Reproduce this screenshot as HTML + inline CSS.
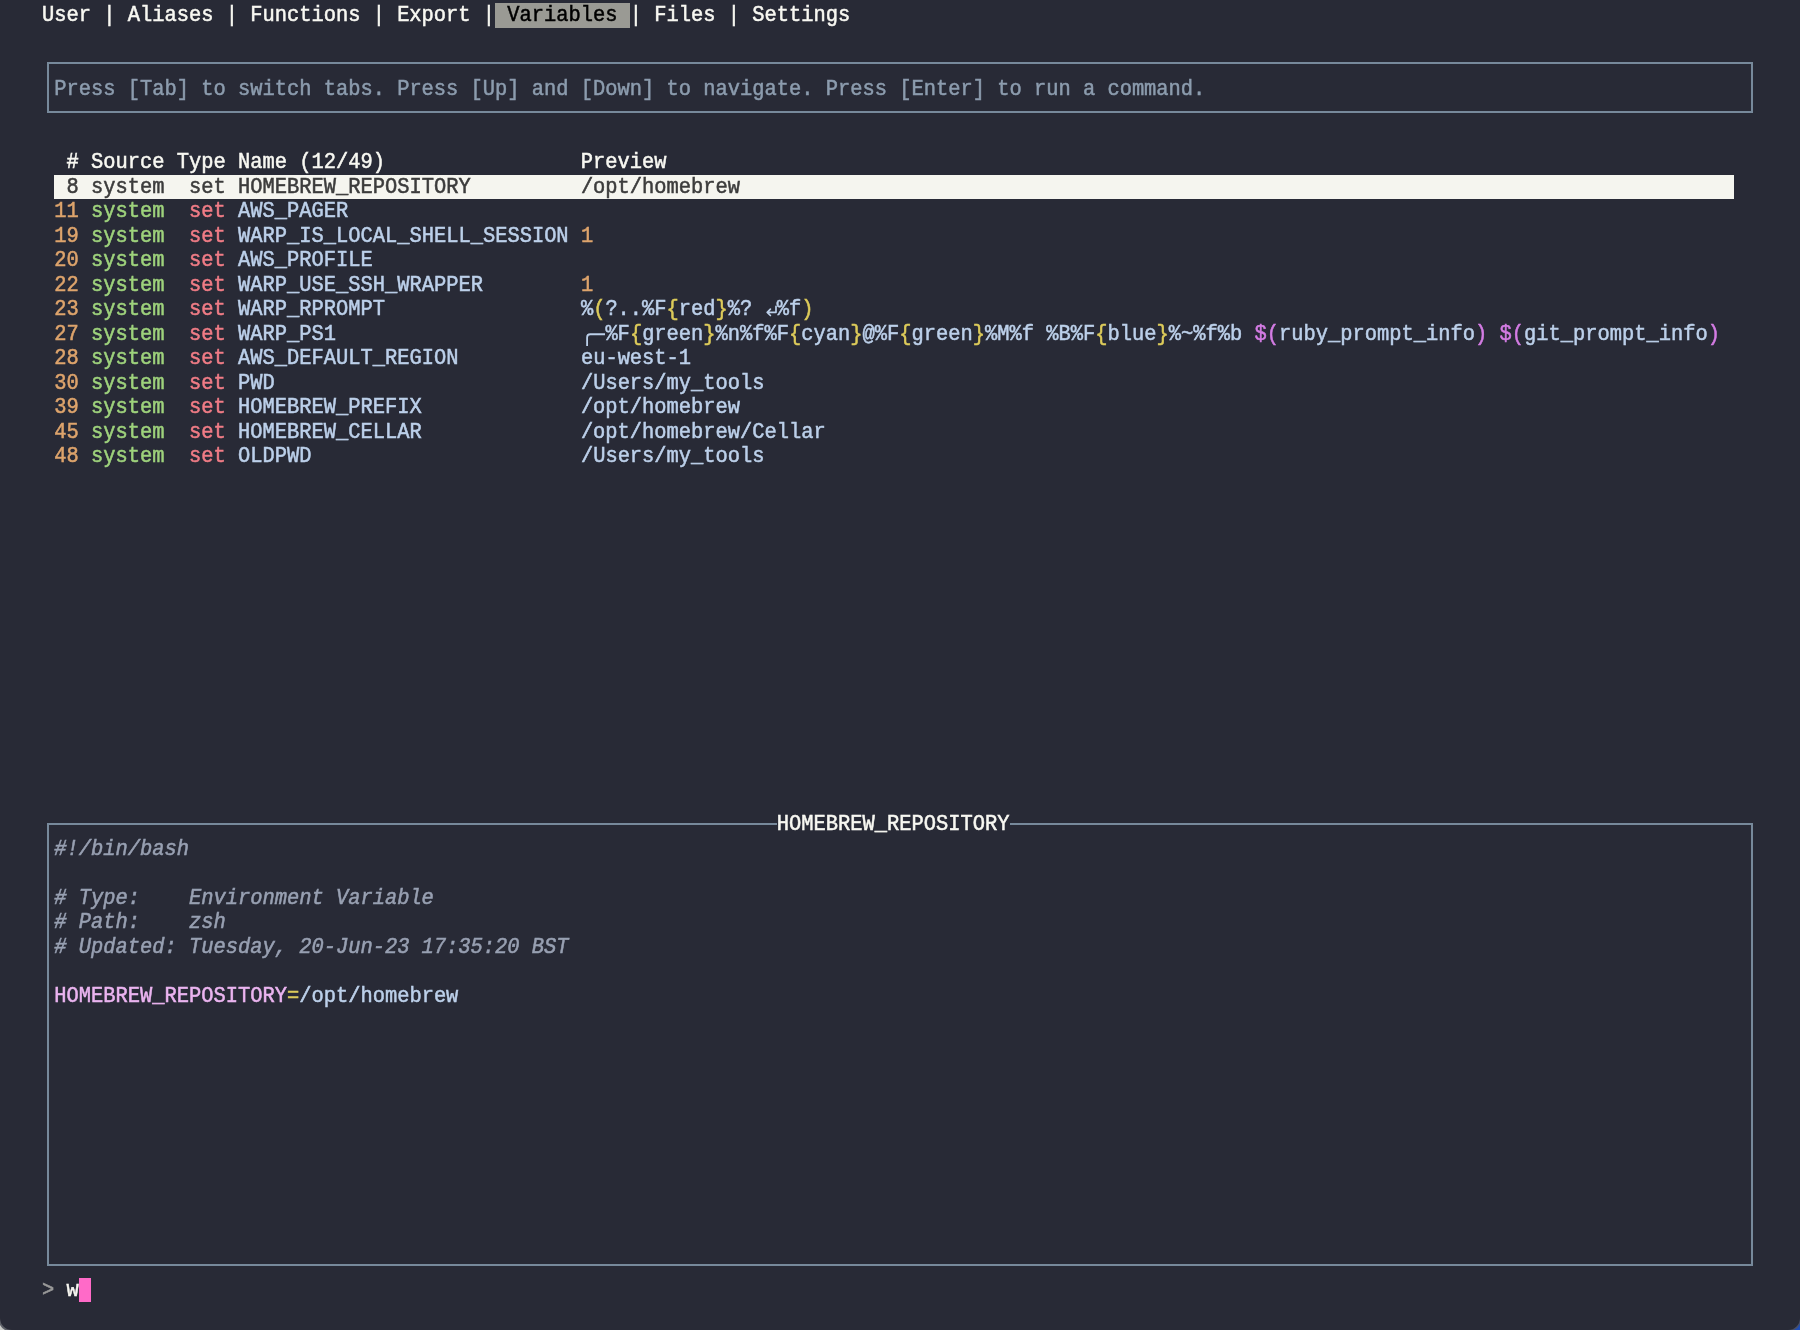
<!DOCTYPE html>
<html><head><meta charset="utf-8">
<style>
html,body{margin:0;padding:0;}
body{width:1800px;height:1330px;overflow:hidden;background:#282a36;position:relative;
font-family:"Liberation Mono",monospace;font-size:20.413px;color:#bcd0ea;}
.r{position:absolute;left:41.75px;height:24.51px;line-height:24.51px;white-space:pre;transform:translateY(1.4px) scaleY(1.06);transform-origin:0 17.69px;-webkit-text-stroke:0.5px currentColor;will-change:transform;}
.fg{color:#f8f8f2}
.tabsel{color:#000}
.hl-tab{position:absolute;background:#9a9a94}
.hl-row{position:absolute;background:#f5f5ef}
.sel{color:#3c3c3c}
.hd{color:#f8f8f2}
.dim{color:#8c9cae}
.o{color:#dea46c}
.g{color:#9ed27c}
.rd{color:#f07c86}
.t{color:#bcd0ea}
.y{color:#ddcb5a}
.p{color:#d47ce4}
.pk{color:#ebb4f0}
.cm{color:#98a0b2;font-style:italic}
.prm{color:#9a9a9a}
.cursor{position:absolute;background:#ff6ac8}
.glyph{position:absolute}
.box{position:absolute;border:2px solid #77899b;box-sizing:border-box;}
#helpbox{left:47px;top:62px;width:1706px;height:51px}
#prevbox{left:47px;top:822.5px;width:1706px;height:443px}

</style></head><body>
<div class="hl-tab" style="left:495.00px;top:3.20px;width:134.75px;height:24.51px"></div>
<div class="r " style="top:3.20px;"><span class="fg">User | Aliases | Functions | Export |</span><span class="tabsel"> Variables </span><span class="fg">| Files | Settings</span></div>
<div class="box" id="helpbox"></div>
<div class="r " style="top:76.73px;"> <span class="dim">Press [Tab] to switch tabs. Press [Up] and [Down] to navigate. Press [Enter] to run a command.</span></div>
<div class="r " style="top:150.26px;">  <span class="hd">#</span> <span class="hd">Source</span> <span class="hd">Type</span> <span class="hd">Name (12/49)</span>                <span class="hd">Preview</span></div>
<div class="hl-row" style="left:54.1px;top:174.5px;width:1679.6px;height:24.7px"></div>
<div class="r " style="top:174.77px;">  <span class="sel">8</span> <span class="sel">system</span>  <span class="sel">set</span> <span class="sel">HOMEBREW_REPOSITORY</span>         <span class="sel">/opt/homebrew</span></div>
<div class="r " style="top:199.28px;"> <span class="o">11</span> <span class="g">system</span>  <span class="rd">set</span> <span class="t">AWS_PAGER</span></div>
<div class="r " style="top:223.79px;"> <span class="o">19</span> <span class="g">system</span>  <span class="rd">set</span> <span class="t">WARP_IS_LOCAL_SHELL_SESSION</span> <span class="o">1</span></div>
<div class="r " style="top:248.30px;"> <span class="o">20</span> <span class="g">system</span>  <span class="rd">set</span> <span class="t">AWS_PROFILE</span></div>
<div class="r " style="top:272.81px;"> <span class="o">22</span> <span class="g">system</span>  <span class="rd">set</span> <span class="t">WARP_USE_SSH_WRAPPER</span>        <span class="o">1</span></div>
<div class="r " style="top:297.32px;"> <span class="o">23</span> <span class="g">system</span>  <span class="rd">set</span> <span class="t">WARP_RPROMPT</span>                <span class="t">%</span><span class="y">(</span><span class="t">?..%F</span><span class="y">{</span><span class="t">red</span><span class="y">}</span><span class="t">%?</span><span class="t"> </span><span class="t"> </span><span class="t">%f</span><span class="y">)</span></div>
<div class="r " style="top:321.83px;"> <span class="o">27</span> <span class="g">system</span>  <span class="rd">set</span> <span class="t">WARP_PS1</span>                    <span class="t">  </span><span class="t">%F</span><span class="y">{</span><span class="t">green</span><span class="y">}</span><span class="t">%n%f%F</span><span class="y">{</span><span class="t">cyan</span><span class="y">}</span><span class="t">@%F</span><span class="y">{</span><span class="t">green</span><span class="y">}</span><span class="t">%M%f %B%F</span><span class="y">{</span><span class="t">blue</span><span class="y">}</span><span class="t">%~%f%b </span><span class="p">$(</span><span class="t">ruby_prompt_info</span><span class="p">)</span><span class="t"> </span><span class="p">$(</span><span class="t">git_prompt_info</span><span class="p">)</span></div>
<div class="r " style="top:346.34px;"> <span class="o">28</span> <span class="g">system</span>  <span class="rd">set</span> <span class="t">AWS_DEFAULT_REGION</span>          <span class="t">eu-west-1</span></div>
<div class="r " style="top:370.85px;"> <span class="o">30</span> <span class="g">system</span>  <span class="rd">set</span> <span class="t">PWD</span>                         <span class="t">/Users/my_tools</span></div>
<div class="r " style="top:395.36px;"> <span class="o">39</span> <span class="g">system</span>  <span class="rd">set</span> <span class="t">HOMEBREW_PREFIX</span>             <span class="t">/opt/homebrew</span></div>
<div class="r " style="top:419.87px;"> <span class="o">45</span> <span class="g">system</span>  <span class="rd">set</span> <span class="t">HOMEBREW_CELLAR</span>             <span class="t">/opt/homebrew/Cellar</span></div>
<div class="r " style="top:444.38px;"> <span class="o">48</span> <span class="g">system</span>  <span class="rd">set</span> <span class="t">OLDPWD</span>                      <span class="t">/Users/my_tools</span></div>
<svg id="ret" class="glyph" width="12.25" height="24.5" viewBox="0 0 12.25 24.5" style="left:764.50px;top:297.32px"><path d="M11 9.3 V15.3 H2.2 M5.4 12.1 L2.2 15.3 L5.4 18.5" fill="none" stroke="#bcd0ea" stroke-width="1.7" stroke-linejoin="round" stroke-linecap="round"/></svg>
<svg id="corner" class="glyph" width="24.5" height="24.5" viewBox="0 0 24.5 24.5" style="left:580.75px;top:321.83px"><path d="M6.1 24.5 V15.5 Q6.1 12.25 9.3 12.25 H24.5" fill="none" stroke="#bcd0ea" stroke-width="1.8"/></svg>
<div class="box" id="prevbox"></div>
<div style="position:absolute;background:#282a36;left:776.75px;top:818.03px;width:232.75px;height:12.510000000000002px"></div>
<div class="r " style="top:812.03px;">                                                            <span class="fg">HOMEBREW_REPOSITORY</span></div>
<div class="r " style="top:836.54px;"> <span class="cm">#!/bin/bash</span></div>
<div class="r " style="top:885.56px;"> <span class="cm"># Type:    Environment Variable</span></div>
<div class="r " style="top:910.07px;"> <span class="cm"># Path:    zsh</span></div>
<div class="r " style="top:934.58px;"> <span class="cm"># Updated: Tuesday, 20-Jun-23 17:35:20 BST</span></div>
<div class="r " style="top:983.60px;"> <span class="pk">HOMEBREW_REPOSITORY</span><span class="y">=</span><span class="t">/opt/homebrew</span></div>
<div class="r " style="top:1277.72px;"><span class="prm">&gt;</span> <span class="fg">w</span></div>
<div class="cursor" style="left:78.50px;top:1277.72px;width:12.25px;height:24.51px"></div>
<svg class="glyph" style="left:0;top:1318px" width="12" height="12" viewBox="0 0 12 12"><path d="M0 0 A12 12 0 0 0 12 12 L0 12 Z" fill="#5d6068"/><path d="M0 7 A12 12 0 0 0 5 12 L0 12 Z" fill="#c9cbc8"/></svg>
<svg class="glyph" style="left:1788px;top:1318px" width="12" height="12" viewBox="0 0 12 12"><path d="M12 0 A12 12 0 0 1 0 12 L12 12 Z" fill="#4a4f66"/><path d="M12 6 A12 12 0 0 1 6 12 L12 12 Z" fill="#1f4db5"/></svg>
</body></html>
